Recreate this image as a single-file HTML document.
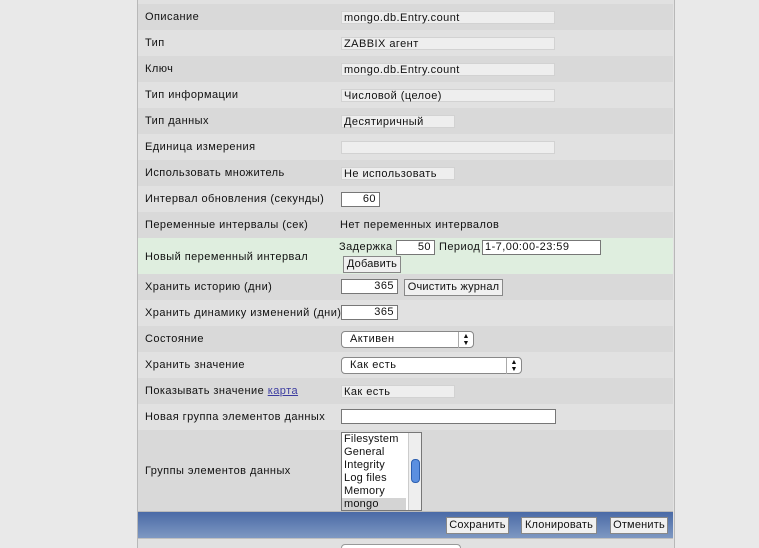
<!DOCTYPE html>
<html><head><meta charset="utf-8"><style>
html,body{margin:0;width:759px;height:548px;overflow:hidden}
body{background:#e9e9e9;font-family:"Liberation Sans","DejaVu Sans",sans-serif;font-size:11px;letter-spacing:.45px;color:#111;position:relative}
.wrap{position:absolute;left:137px;top:0;width:536px;height:548px;border-left:1px solid #b8b8b8;border-right:1px solid #b8b8b8;background:#e2e2e2}
.r{position:absolute;left:138px;width:535px}
.d{background:#d9d9d9}.l{background:#e1e1e1}
.t{position:absolute;left:145px;white-space:nowrap}
.ro{position:absolute;left:341px;height:13px;background:#eeeeee;border:1px solid #d2d2d2;box-sizing:border-box;padding-left:2px;line-height:12px;white-space:nowrap}
.in{position:absolute;height:15px;background:#fff;border:1px solid #777;box-sizing:border-box;line-height:13px;padding:0 3px;text-align:right}
.btn{position:absolute;height:17px;background:#f0f0f0;border:1px solid #888;box-sizing:border-box;line-height:15px;text-align:center;white-space:nowrap;letter-spacing:.2px}
.sel{position:absolute;height:17px;background:#fff;border:1px solid #888;border-radius:4px;box-sizing:border-box;line-height:15px;padding-left:8px}
.sel i{position:absolute;right:0;top:0;width:14px;height:15px;border-left:1px solid #aaa;font-style:normal;font-size:7px;text-align:center;line-height:7px;padding-top:1px;letter-spacing:0}
</style></head><body>
<div class="wrap"></div>
<div class="r l" style="top:0;height:4px"></div>
<div class="r d" style="top:4px;height:26px"></div>
<div class="r l" style="top:30px;height:26px"></div>
<div class="r d" style="top:56px;height:26px"></div>
<div class="r l" style="top:82px;height:26px"></div>
<div class="r d" style="top:108px;height:26px"></div>
<div class="r l" style="top:134px;height:26px"></div>
<div class="r d" style="top:160px;height:26px"></div>
<div class="r l" style="top:186px;height:26px"></div>
<div class="r d" style="top:212px;height:26px"></div>
<div class="r" style="top:238px;height:36px;background:#dfeedf"></div>
<div class="r d" style="top:274px;height:26px"></div>
<div class="r l" style="top:300px;height:26px"></div>
<div class="r d" style="top:326px;height:26px"></div>
<div class="r l" style="top:352px;height:26px"></div>
<div class="r d" style="top:378px;height:26px"></div>
<div class="r l" style="top:404px;height:26px"></div>
<div class="r d" style="top:430px;height:82px;border-bottom:1px solid #bbb;box-sizing:border-box"></div>
<div class="r" style="top:512px;height:26px;background:linear-gradient(#4a6aa6,#7e98c2)"></div>
<div class="r l" style="top:538px;height:10px;border-top:1px solid #c0c0c0"></div>

<div class="t" style="top:11px">Описание</div><div class="ro" style="top:11px;width:214px">mongo.db.Entry.count</div>
<div class="t" style="top:37px">Тип</div><div class="ro" style="top:37px;width:214px">ZABBIX агент</div>
<div class="t" style="top:63px">Ключ</div><div class="ro" style="top:63px;width:214px">mongo.db.Entry.count</div>
<div class="t" style="top:89px">Тип информации</div><div class="ro" style="top:89px;width:214px">Числовой (целое)</div>
<div class="t" style="top:115px">Тип данных</div><div class="ro" style="top:115px;width:114px">Десятиричный</div>
<div class="t" style="top:141px">Единица измерения</div><div class="ro" style="top:141px;width:214px"></div>
<div class="t" style="top:167px">Использовать множитель</div><div class="ro" style="top:167px;width:114px">Не использовать</div>
<div class="t" style="top:193px">Интервал обновления (секунды)</div><div class="in" style="left:341px;top:192px;width:39px">60</div>
<div class="t" style="top:219px">Переменные интервалы (сек)</div><div class="t" style="left:340px;top:219px">Нет переменных интервалов</div>
<div class="t" style="top:251px">Новый переменный интервал</div>
<div class="t" style="left:339px;top:241px">Задержка</div><div class="in" style="left:396px;top:240px;width:39px">50</div>
<div class="t" style="left:439px;top:241px">Период</div><div class="in" style="left:482px;top:240px;width:119px;text-align:left;padding-left:2px">1-7,00:00-23:59</div>
<div class="btn" style="left:343px;top:256px;width:58px">Добавить</div>
<div class="t" style="top:281px">Хранить историю (дни)</div><div class="in" style="left:341px;top:279px;width:57px">365</div>
<div class="btn" style="left:404px;top:279px;width:99px">Очистить журнал</div>
<div class="t" style="top:307px">Хранить динамику изменений (дни)</div><div class="in" style="left:341px;top:305px;width:57px">365</div>
<div class="t" style="top:333px">Состояние</div><div class="sel" style="left:341px;top:331px;width:133px">Активен<i>▲<br>▼</i></div>
<div class="t" style="top:359px">Хранить значение</div><div class="sel" style="left:341px;top:357px;width:181px">Как есть<i>▲<br>▼</i></div>
<div class="t" style="top:385px">Показывать значение <span style="color:#3c3ca0;text-decoration:underline">карта</span></div><div class="ro" style="top:385px;width:114px">Как есть</div>
<div class="t" style="top:411px">Новая группа элементов данных</div><div class="in" style="left:341px;top:409px;width:215px"></div>
<div class="t" style="top:465px">Группы элементов данных</div>
<div style="position:absolute;left:341px;top:432px;width:81px;height:79px;background:#fff;border:1px solid #777;box-sizing:border-box;overflow:hidden;line-height:13px;font-size:11px;letter-spacing:.2px">
<div style="padding-left:2px">Filesystem</div><div style="padding-left:2px">General</div><div style="padding-left:2px">Integrity</div><div style="padding-left:2px">Log files</div><div style="padding-left:2px">Memory</div><div style="padding-left:2px;background:#d4d4d4;width:62px">mongo</div>
<div style="position:absolute;right:0;top:0;width:12px;height:77px;background:#eee;border-left:1px solid #ccc"><div style="position:absolute;left:2px;top:26px;width:7px;height:22px;border-radius:4px;background:#5b8fe0;border:1px solid #2c5fb0"></div></div>
</div>
<div class="btn" style="left:446px;top:517px;width:63px">Сохранить</div>
<div class="btn" style="left:521px;top:517px;width:76px">Клонировать</div>
<div class="btn" style="left:610px;top:517px;width:58px">Отменить</div>
<div style="position:absolute;left:341px;top:544px;width:118px;height:4px;border:1px solid #999;border-bottom:none;border-radius:4px 4px 0 0;background:#fff"></div>
</body></html>
